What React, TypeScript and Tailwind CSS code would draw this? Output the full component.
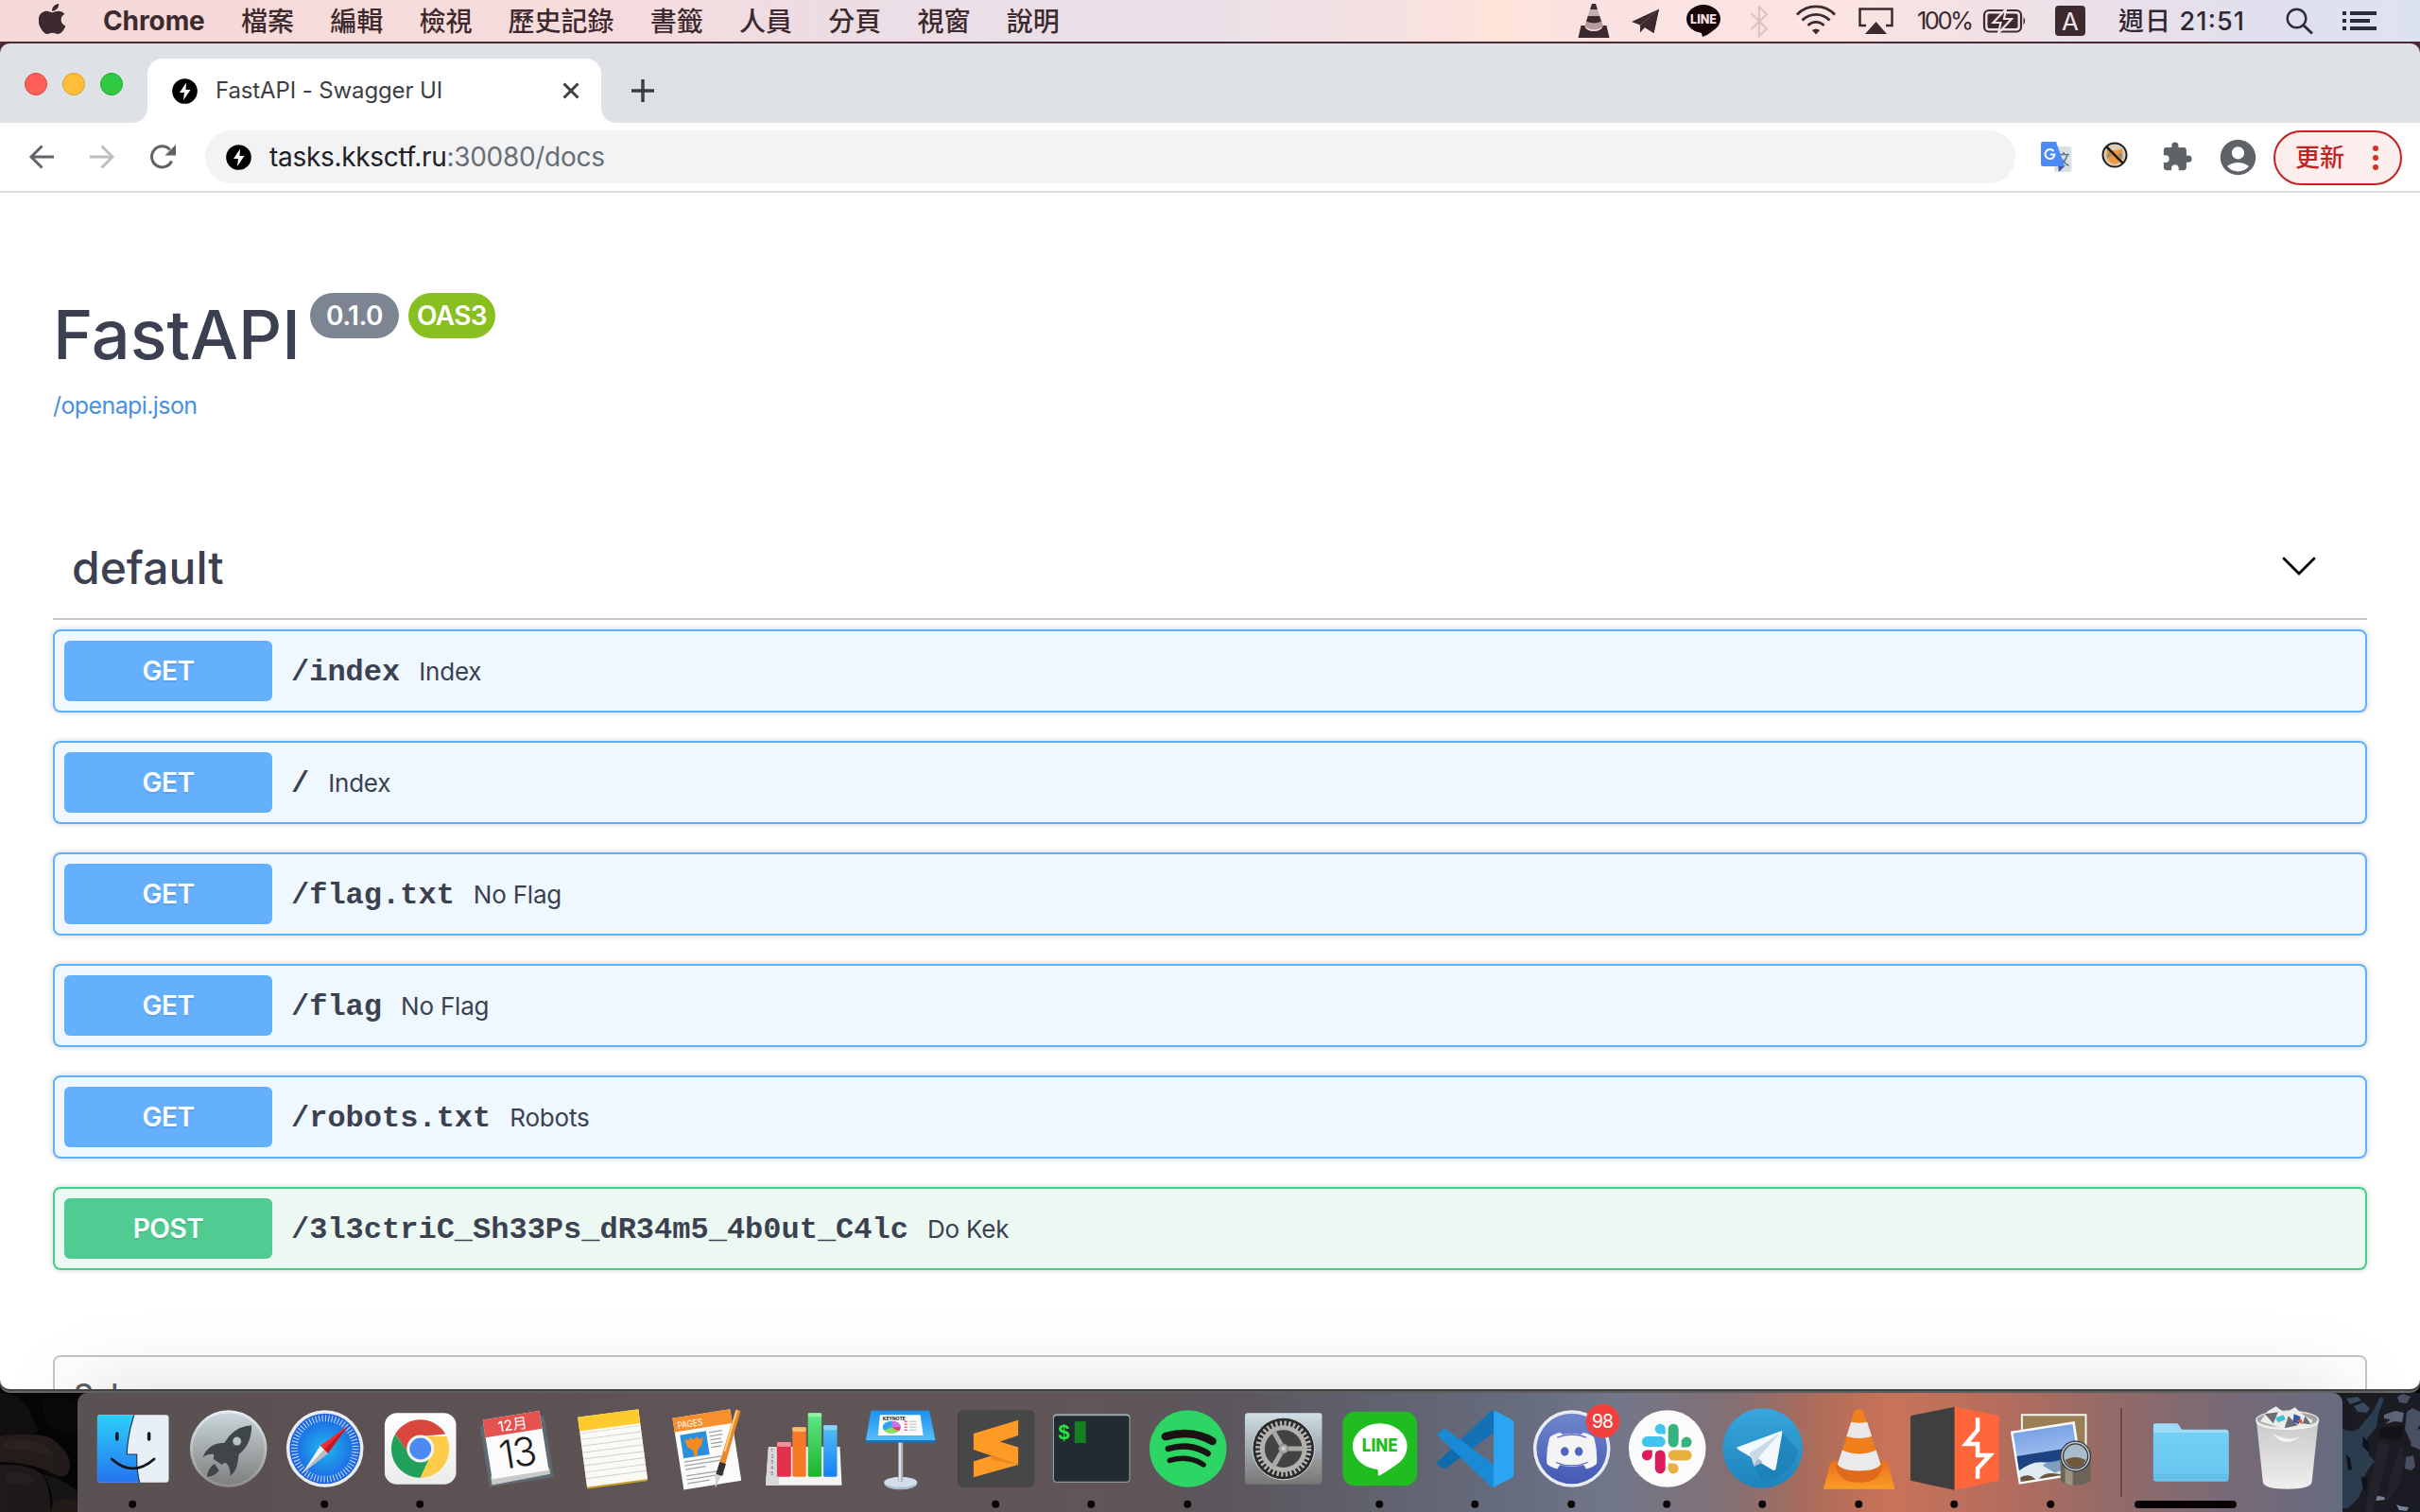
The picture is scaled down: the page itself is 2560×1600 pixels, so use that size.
import React from "react";
import { FaApple } from "react-icons/fa";
import { MdExtension, MdAccountCircle } from "react-icons/md";

const INK = "#3d2a2e";

/* ---------- macOS menu bar ---------- */

const menus = ["檔案", "編輯", "檢視", "歷史記錄", "書籤", "人員", "分頁", "視窗", "說明"];

function MenuBar() {
  return (
    <div className="relative flex h-11 shrink-0 items-center bg-[linear-gradient(90deg,#f5d8d8_0%,#f7dcdc_18%,#f5dbdd_27%,#ecdde4_34%,#eadfe7_45%,#ede0e7_52%,#f6e1e1_58%,#ffe3da_62%,#fae2e2_66%,#fbe4e2_76%,#f3e1e4_81%,#e9e0ea_87%,#dfe0ef_95%,#dde2f1_100%)] pl-[41px] text-[28px] leading-[44px] text-[#3d2a2e]">
      <FaApple className="-mt-[5px] h-8 w-7 shrink-0" preserveAspectRatio="none" viewBox="8 32 368 448" />
      <span className="ml-[40px] w-[146px] font-bold tracking-[-0.1px]">Chrome</span>
      <div className="flex gap-[38.2px] pt-[2px] font-medium">
        {menus.map((m) => (
          <span key={m}>{m}</span>
        ))}
      </div>
      <svg className="absolute left-[1660px] top-0" width="900" height="44" viewBox="1660 0 900 44" fill={INK}>
        <path d="M1684 4h4l2 6h-8z" />
        <path d="M1682 10h8l2.500 7.500q-6.500 2-13 0z" fill="#c4adae" />
        <path d="M1679.800 17h12.400l2 6q-8 4-16.400 0z" />
        <path d="M1678 22.500q8 4 16.200 0l2 5.500q-10 7-20 0z" fill="#b39b9d" />
        <path d="M1672.500 27h3.500q2 6 10 6t10-6h3.500l3 13h-33z" />
        <path d="M1755 9.500 1726 23l9 3.500zM1755 9.500l-17.500 18L1749.500 35z" />
        <path d="M1755 9.500 1735 26.500v8l5-5.500 9.500 6z" />
        <ellipse cx="1802" cy="20" rx="18" ry="15" fill="#170508" />
        <path d="M1791 30q10 3 10 9 11-4 15-12z" fill="#170508" />
        <text x="1802" y="24.500" fontSize="12.500" fontWeight="800" fill="#fbe3e2" textAnchor="middle" fontFamily="Inter">LINE</text>
        <path d="M1852.500 14 1869 30.500 1860.800 38V7.500L1869 15 1852.500 31" fill="none" stroke="#d9c3c5" strokeWidth="2" />
        <g fill="none" stroke={INK} strokeWidth="2.800">
          <path d="M1901 15.500a27.500 27.500 0 0 1 40 0" />
          <path d="M1906.500 21.500a20 20 0 0 1 29 0" />
          <path d="M1912.500 27a12 12 0 0 1 17 0" />
        </g>
        <path d="M1917 32q4-3 8 0l-4 4.500z" />
        <path d="M1974 27h-6.500V9.500h34V27h-6.500" fill="none" stroke={INK} strokeWidth="2.500" />
        <path d="M1984.500 23 1996 36h-23z" />
        <text x="2028" y="31" fontSize="25.500" textLength="60" fontFamily="Inter" fontWeight="400">100%</text>
        <rect x="2099" y="11" width="39" height="22.500" rx="5" fill="none" stroke={INK} strokeWidth="2.200" />
        <rect x="2102.500" y="14.500" width="32" height="15.500" rx="2" />
        <path d="M2140.500 18q3.500 4.500 0 8.500z" />
        <path d="M2122 9.500 2108.500 24h8l-2.500 11 14-15h-8z" stroke="#f3e1e4" strokeWidth="2.200" />
        <rect x="2174" y="6" width="32" height="32" rx="4" />
        <text x="2190" y="31.500" fontSize="26" fill="#f1e3e8" textAnchor="middle" fontFamily="Inter">A</text>
        <text x="2241" y="31.500" fontSize="27" textLength="133" fontWeight="500" fill="#302730" fontFamily="Inter, 'Noto Sans CJK TC', sans-serif">週日 21:51</text>
        <circle cx="2429.500" cy="19.500" r="9.800" fill="none" stroke="#302a35" strokeWidth="2.400" />
        <path d="m2436.500 26.500 9.500 9" fill="none" stroke="#302a35" strokeWidth="3" />
        <path d="M2478 12h4v4h-4zM2478 20h4v4h-4zM2478 28h4v4h-4zM2486 12h28v4h-28zM2486 20h21v4h-21zM2486 28h28v4h-28z" fill="#2a2a3a" />
      </svg>
    </div>
  );
}

/* ---------- Chrome window ---------- */

function Bolt() {
  return (
    <svg width="27" height="27" viewBox="0 0 27 27" className="shrink-0">
      <circle cx="13.500" cy="13.500" r="13.300" />
      <path d="M15 4.500 8 15h5l-1 8 7.500-11h-5z" fill="#fff" />
    </svg>
  );
}

function TabStrip() {
  return (
    <div className="flex h-[84px] shrink-0 items-end rounded-t-[10px] bg-[#dee1e6]">
      <div className="flex w-[140px] items-center gap-4 self-stretch pl-[26px] pt-[2px]">
        <i className="size-6 rounded-full border border-[#e0443e] bg-[#ff5f57]" />
        <i className="size-6 rounded-full border border-[#dea123] bg-[#ffbd3a]" />
        <i className="size-6 rounded-full border border-[#1aab29] bg-[#30cb43]" />
      </div>
      <svg width="16" height="16" className="shrink-0">
        <path d="M16 0v16H0A16 16 0 0 0 16 0z" fill="#fff" />
      </svg>
      <div className="flex h-[68px] w-[480px] items-center rounded-t-2xl bg-white pl-[26px]">
        <Bolt />
        <span className="ml-[19px] grow text-[24px] leading-[68px] tracking-[-0.12px] text-[#3c4043]">FastAPI - Swagger UI</span>
        <svg width="18" height="18" viewBox="0 0 18 18" className="mr-[23px]">
          <path d="m1.500 1.500 15 15m0-15-15 15" stroke="#3c4043" strokeWidth="3" />
        </svg>
      </div>
      <svg width="16" height="16" className="shrink-0">
        <path d="M0 0v16h16A16 16 0 0 1 0 0z" fill="#fff" />
      </svg>
      <svg width="24" height="24" viewBox="0 0 24 24" className="mb-[22px] ml-4">
        <path d="M12 0v24M0 12h24" stroke="#3c4043" strokeWidth="3.500" />
      </svg>
    </div>
  );
}

function Toolbar() {
  return (
    <div className="flex h-[74px] shrink-0 items-center border-b-2 border-[#dadce0] bg-white pl-[30px]">
      <svg width="28" height="28" viewBox="0 0 28 28" fill="none" stroke="#5f6368" strokeWidth="3">
        <path d="M27 14H3M14.500 2.500 3 14l11.500 11.500" />
      </svg>
      <svg width="28" height="28" viewBox="0 0 28 28" fill="none" stroke="#bcbec1" strokeWidth="3" className="ml-9">
        <path d="M1 14h24M13.500 2.500 25 14 13.500 25.500" />
      </svg>
      <svg width="28" height="28" viewBox="0 0 28 28" className="ml-9">
        <path d="M23.500 18.500a11 11 0 1 1-1.800-12" fill="none" stroke="#5f6368" strokeWidth="3" />
        <path d="M28 1v11.500H16.500z" fill="#5f6368" />
      </svg>
      <div className="ml-[31px] flex h-14 w-[1915px] items-center rounded-full bg-[#f1f3f4] pl-[22px]">
        <Bolt />
        <span className="ml-[19px] text-[28px] leading-[56px] tracking-[-0.3px] text-[#202124]">
          tasks.kksctf.ru<span className="text-[#6a6e73]">:30080/docs</span>
        </span>
      </div>
      <svg width="34" height="34" viewBox="0 0 34 34" className="ml-[27px]">
        <rect x="14" y="6" width="18.500" height="27" rx="2" fill="#dcdfe2" />
        <path d="M18 14.500h12M24 12v2.500M28 14.500q-2 8-9 11.500M20.500 17q2 5 9 9.500" stroke="#5c7c8a" strokeWidth="1.700" fill="none" />
        <path d="m19 33 7-7h-8z" fill="#3c54b8" />
        <path d="M2 1h14l9 26H2q-2 0-2-2V3q0-2 2-2z" fill="#4c8bf5" />
        <path d="M13.500 11A5 5 0 1 0 14.500 14.500H9.800" stroke="#fff" strokeWidth="2" fill="none" />
      </svg>
      <svg width="28" height="28" viewBox="0 0 28 28" className="-mt-1 ml-[30px]">
        <circle cx="14" cy="14" r="12.500" fill="#d9cdbb" stroke="#1f1f1f" strokeWidth="2" />
        <path d="m6 7 5 2h6l5-2 1 9-4 6-5 2-5-2-4-6z" fill="#f0993a" />
        <path d="m7 11 4 3-5 4zM21 11l-4 3 5 4z" fill="#8a8f95" />
        <path d="m5 5 18 18" stroke="#1f1f1f" strokeWidth="2.500" />
      </svg>
      <MdExtension className="ml-[35px] size-[34px] text-[#5f6368]" />
      <MdAccountCircle className="ml-[25px] size-[45px] text-[#5f6368]" />
      <div className="ml-[15px] mt-[1px] flex h-[58px] w-[136px] items-center rounded-full border-[2.500px] border-[#c5221f] bg-[#fceeed] pl-[21px] text-[26px] leading-[54px] text-[#c5221f]">
        <span className="mt-[1px] font-medium">更新</span>
        <span className="ml-[30px] flex flex-col gap-1">
          <i className="size-[6px] rounded-full bg-[#d93025]" />
          <i className="size-[6px] rounded-full bg-[#d93025]" />
          <i className="size-[6px] rounded-full bg-[#d93025]" />
        </span>
      </div>
    </div>
  );
}

type Op = { method: "GET" | "POST"; path: string; summary: string };

const ops: Op[] = [
  { method: "GET", path: "/index", summary: "Index" },
  { method: "GET", path: "/", summary: "Index" },
  { method: "GET", path: "/flag.txt", summary: "No Flag" },
  { method: "GET", path: "/flag", summary: "No Flag" },
  { method: "GET", path: "/robots.txt", summary: "Robots" },
  { method: "POST", path: "/3l3ctriC_Sh33Ps_dR34m5_4b0ut_C4lc", summary: "Do Kek" },
];

const rowStyle = {
  GET: "border-[#61affe] bg-[#eff7ff]",
  POST: "border-[#49cc90] bg-[#ecf9f3]",
};
const methodStyle = {
  GET: "bg-[#65b0fd]",
  POST: "bg-[#50cc93]",
};

function Operation({ method, path, summary }: Op) {
  return (
    <div className={`flex h-[88px] items-center rounded-lg border-2 pl-[10px] shadow-[0_0_6px_rgba(0,0,0,0.19)] ${rowStyle[method]}`}>
      <span className={`h-16 w-[220px] rounded-md text-center text-[28px] font-semibold leading-[64px] tracking-[-0.4px] text-white [text-shadow:0_2px_0_rgba(0,0,0,0.1)] ${methodStyle[method]}`}>
        {method}
      </span>
      <span className="ml-[20px] pt-[4px] font-['Liberation_Mono'] text-[32px] font-bold leading-[60px] text-[#3b4151]">{path}</span>
      <span className="ml-[20px] pt-[2px] text-[26px] leading-[60px] tracking-[-0.2px] text-[#3b4151]">{summary}</span>
    </div>
  );
}

function Docs() {
  return (
    <main className="flex grow flex-col overflow-hidden bg-white px-14 pt-[106px] text-[#3b4151]">
      <div className="flex h-[88px] shrink-0 items-start">
        <h1 className="w-[272px] whitespace-nowrap text-[72px] font-medium leading-[88px] tracking-[0px]">FastAPI</h1>
        <span className="h-12 w-[94px] rounded-[24px] bg-[#7d8492] text-center text-[28px] font-semibold leading-[48px] tracking-[-0.5px] text-white">0.1.0</span>
        <span className="ml-[10px] h-12 w-[92px] rounded-[24px] bg-[#89bf20] text-center text-[28px] font-semibold leading-[48px] tracking-[-0.6px] text-white">OAS3</span>
      </div>
      <a className="mt-[14px] h-[33px] shrink-0 text-[25px] leading-[35px] tracking-[-0.6px] text-[#4990e2]">/openapi.json</a>
      <div className="mt-[103px] flex h-[108px] shrink-0 items-center justify-between border-b-2 border-[#c5c6cb] pl-[20px] pr-[54px]">
        <h2 className="text-[48px] font-medium leading-[106px] tracking-[0px]">default</h2>
        <svg width="36" height="20" viewBox="0 0 36 20" className="-mt-[4px]">
          <path d="m2 2 16 16L34 2" fill="none" stroke="#000" strokeWidth="2.800" strokeLinecap="round" />
        </svg>
      </div>
      <div className="mt-[10px] flex flex-col gap-[30px]">
        {ops.map((o) => (
          <Operation key={o.path} {...o} />
        ))}
      </div>
      <section className="mt-[90px] flex h-[120px] shrink-0 items-start rounded-lg border-2 border-[#c4c5cb] pl-[20px] pt-[21px]">
        <h3 className="text-[32px] font-medium leading-[40px] text-[#606060]">Schemas</h3>
      </section>
    </main>
  );
}

/* ---------- Dock ---------- */

/* Each drawing uses a 102x126 cell, with the icon centred on (51, 59). */
const FinderIcon = (
  <g>
    <rect x="13" y="23" width="76" height="72" rx="3" fill="#e9eff6" />
    <path d="M16 23h36q-7 22-7.500 42H55q-.5 16 3 30H16q-3 0-3-3V26q0-3 3-3z" fill="url(#finder)" />
    <path d="M52 23q-7 22-7.500 42H55q-.5 16 3 30" fill="none" stroke="#1b3a5e" strokeWidth="1.200" />
    <path d="M34 43v6M68 43v6" stroke="#141a24" strokeWidth="3.500" strokeLinecap="round" />
    <path d="M28.500 70q22 20 45 0" fill="none" stroke="#11161e" strokeWidth="2.800" strokeLinecap="round" />
  </g>
);

const LaunchpadIcon = (
  <g>
    <circle cx="51" cy="59" r="41" fill="url(#rimGrey)" />
    <circle cx="51" cy="59" r="38" fill="url(#launch)" />
    <path d="M75.500 34q-15 1-24 12l-5 7q-10-1-17 6-4 4-6 9 7-4 12-3l-.5 5 9 6q1-2 4-2 5 3 5 14 7-6 8-16l1-7q14-11 13.500-31z" fill="#3f4549" />
    <path d="M36 75q-7 5-8 14 9-1 13-7z" fill="#3f4549" />
    <circle cx="60" cy="51" r="4.500" fill="#b9c4c9" />
  </g>
);

const SafariIcon = (
  <g>
    <circle cx="51" cy="59" r="41" fill="#e9ecf0" />
    <circle cx="51" cy="59" r="37.500" fill="url(#safari)" />
    <circle cx="51" cy="59" r="32.500" fill="none" stroke="#d6ecff" strokeWidth="7" strokeDasharray="1.100 2.303" opacity=".85" />
    <path d="m76 34-30 22 8 8z" fill="#ee2b33" />
    <path d="m76 34-22 30-4-4z" fill="#c3161f" />
    <path d="m27 85 19-29 8 8z" fill="#f4f4f4" />
    <path d="m27 85 27-21-4-4z" fill="#b9bcc0" />
  </g>
);

const ChromeIcon = (
  <g>
    <rect x="13" y="21" width="76" height="76" rx="13" fill="url(#paper)" />
    <g transform="translate(51 59)">
      <path d="M-26.800-15.500A31 31 0 0 1 26.800-15.500L0-13-11.300 6.500z" fill="#d9463d" />
      <path d="M-26.800-15.500-11.300 6.500 0 0 11.300 6.500 0 31A31 31 0 0 1-26.800-15.500z" fill="#21a05b" />
      <path d="M0 31 11.300 6.500 0-13H27.800A31 31 0 0 1 0 31z" fill="#fecb4b" />
      <circle r="14.500" fill="#f3f3f3" />
      <circle r="11.500" fill="#4b8af2" />
    </g>
  </g>
);

const CalendarIcon = (
  <g transform="rotate(-9 51 59)">
    <rect x="16" y="29" width="69" height="66" fill="#5d6a72" />
    <path d="M19 84h63v7l-63 2z" fill="#c9c9c9" />
    <rect x="20" y="23" width="61" height="64" fill="#fbfbfb" />
    <rect x="20" y="23" width="61" height="19" fill="#e4534f" />
    <text x="50.500" y="38.500" textAnchor="middle" fontSize="15.500" fill="#fff" fontFamily="Inter, 'Noto Sans CJK TC', sans-serif">12月</text>
    <text x="50.500" y="78.500" textAnchor="middle" fontSize="42" fontWeight="300" letterSpacing="-2" fill="#1d1d1d" fontFamily="Inter, sans-serif">13</text>
  </g>
);

const NotesIcon = (
  <g transform="rotate(-7.500 51 59)">
    <rect x="19" y="22" width="65" height="76" rx="1" fill="#c79d2b" />
    <rect x="19" y="21" width="65" height="75" rx="1" fill="#fbfaf7" />
    <path d="M19 21h65v15H19z" fill="#fecb2f" />
    <path d="M19 38.500h65" stroke="#b9b3a3" strokeDasharray="1 1.500" />
    <path d="M19 45h65M19 52h65M19 59h65M19 66h65M19 73h65M19 80h65M19 87h65" stroke="#cfcfd2" strokeWidth="1" />
  </g>
);

const PagesIcon = (
  <g>
    <g transform="rotate(-9 51 59)">
      <rect x="18" y="21" width="62" height="77" fill="#fbfbfb" />
      <rect x="18" y="21" width="62" height="15" fill="#f78f2a" />
      <text x="22" y="33" fontSize="10" fill="#fff" textLength="27" lengthAdjust="spacingAndGlyphs" fontFamily="Inter">PAGES</text>
      <rect x="23" y="40" width="28" height="25" fill="#2b8fe0" />
      <path d="m27 45 5 2 1-3 4 3 4-3 1 3 5-1-3 8-5 4-1 7h-3l-1-7-5-4z" fill="#f58a1f" />
      <path d="M54 42h14M54 46h14M54 50h12M54 54h13M54 58h11M23 69h40M23 73h42M23 77h22M23 84h38M23 88h40M23 92h24" stroke="#a3a3a3" strokeWidth="1.300" />
    </g>
    <path d="m80 17 5 2-18 62-8 16 2-18z" fill="#e9892b" />
    <path d="m81 18-13 44" stroke="#ffd087" strokeWidth="2" />
    <path d="m66 74-4 13" stroke="#333" strokeWidth="7" />
    <path d="m58 86 6 2-6 13z" fill="#cfd3d8" />
  </g>
);

const NumbersIcon = (
  <g>
    <path d="M13 57h76l2 41H10z" fill="#f4f4f4" />
    <path d="M13 57h11v41H10z" fill="#d9d9dc" />
    <g fontSize="5" fill="#666" fontFamily="Inter">
      <text x="15.500" y="63">1</text>
      <text x="15.500" y="69">2</text>
      <text x="15" y="75">3</text>
      <text x="15" y="81">4</text>
      <text x="15" y="87">5</text>
    </g>
    <rect x="22" y="52" width="15" height="37" rx="1.500" fill="#e2304d" />
    <rect x="22" y="52" width="15" height="5" rx="1.500" fill="#f58c96" />
    <rect x="38.500" y="36" width="14.500" height="53" rx="1.500" fill="#f47a2a" />
    <rect x="38.500" y="36" width="14.500" height="5" rx="1.500" fill="#fcbc6b" />
    <rect x="55" y="21" width="14.500" height="68" rx="1.500" fill="url(#barGreen)" />
    <rect x="55" y="21" width="14.500" height="4" rx="1.500" fill="#93f0a7" />
    <rect x="71.500" y="34" width="14.500" height="55" rx="1.500" fill="url(#barBlue)" />
    <rect x="71.500" y="34" width="14.500" height="5" rx="1.500" fill="#8ad4fb" />
  </g>
);

const KeynoteIcon = (
  <g>
    <ellipse cx="51" cy="96" rx="17.500" ry="6.500" fill="#a9bccd" />
    <ellipse cx="51" cy="94.500" rx="17.500" ry="5.500" fill="#d2dfea" />
    <path d="M48.500 52h5v42h-5z" fill="#aeb6bd" />
    <path d="M49.500 52h1.500v42h-1.500z" fill="#eef1f4" />
    <path d="M19.500 18.500h62L88 50v2.500H14V50z" fill="#1176c0" />
    <path d="M19.500 18.500h62L88 50H14z" fill="url(#keynote)" />
    <path d="M29 23h43l3 22H27z" fill="#fdfdfd" />
    <text x="32" y="28.500" fontSize="5" fontWeight="800" textLength="24" lengthAdjust="spacingAndGlyphs" fill="#333" fontFamily="Inter">KEYNOTE</text>
    <ellipse cx="41.500" cy="36" rx="9.500" ry="6.500" fill="#2fa4ee" />
    <path d="M41.500 36 42 29.500q8 0 9 6.500z" fill="#cf6fe8" />
    <path d="M41.500 36H51q0 3-3 5z" fill="#f23a57" />
    <path d="m41.500 36 7 4.500q-8 5-15.500-1z" fill="#8ddc5a" />
    <path d="M55 30h3M55 33h3M55 36h3M55 39h3" stroke="#e8608b" strokeWidth="1.500" />
    <path d="M60 30h8M60 33h8M60 36h8M60 39h8" stroke="#bbb" strokeWidth="1" />
  </g>
);

const SublimeIcon = (
  <g>
    <rect x="10" y="18" width="82" height="82" rx="5" fill="#474747" />
    <path d="M27 72.500 46 66.500 74.500 76 27 89.500z" fill="#ff9a27" />
    <path d="M27 43 74.500 28.500V45L55 51.500l19.500 6V76L27 60z" fill="#ff9a27" />
    <path d="m46 66.500 28.500 9.500-28-5z" fill="#e5831a" opacity=".7" />
  </g>
);

const TerminalIcon = (
  <g>
    <rect x="10" y="22" width="82" height="73" rx="4" fill="#9aa7ad" />
    <rect x="11" y="24" width="80" height="70" rx="3" fill="#212b31" />
    <text x="15" y="49" fontSize="22" fontWeight="700" fill="#28e639" fontFamily="'Liberation Mono', monospace">$</text>
    <rect x="33" y="30" width="12" height="23" fill="#158021" />
  </g>
);

const SpotifyIcon = (
  <g>
    <circle cx="51" cy="59" r="41" fill="#2dd565" />
    <g fill="none" stroke="#191414" strokeLinecap="round">
      <path d="M27 46q28-8 50 5" strokeWidth="8.500" />
      <path d="M30 59q23-7 42 5" strokeWidth="6.500" />
      <path d="M31.500 71.500q20-6 36 4.500" strokeWidth="5.500" />
    </g>
  </g>
);

const SettingsIcon = (
  <g>
    <rect x="10" y="21" width="82" height="76" rx="3" fill="url(#steel)" />
    <circle cx="51" cy="59" r="33" fill="#2b2b2c" stroke="#d4dde2" strokeWidth="1" />
    <circle cx="51" cy="59" r="27" fill="none" stroke="#b9b7b4" strokeWidth="5.500" strokeDasharray="2.300 2.412" />
    <circle cx="51" cy="59" r="22.500" fill="#434343" stroke="#b3b1ae" strokeWidth="5" />
    <path d="M51 59h22M51 59 40 40M51 59 40 78" stroke="#aaa8a5" strokeWidth="5" />
    <circle cx="51" cy="59" r="5" fill="#a9a7a4" stroke="#7d7b78" />
    <circle cx="51" cy="59" r="2" fill="#d2d2d0" />
  </g>
);

const LineIcon = (
  <g>
    <rect x="11.500" y="19.500" width="79" height="79" rx="13" fill="#20bd20" />
    <ellipse cx="51" cy="56.500" rx="29" ry="24.500" fill="#fff" />
    <path d="M36 75q15 3 13 11.500 0 2 2 1Q72 75 77 67z" fill="#fff" />
    <text x="51" y="62.500" textAnchor="middle" fontSize="18.500" fontWeight="800" textLength="38" lengthAdjust="spacingAndGlyphs" fill="#20bd20" fontFamily="Inter">LINE</text>
  </g>
);

const CodeIcon = (
  <g>
    <path d="M10 74 66 20q3-3 6-1v22L20 79q-3 2-5 0l-5-3z" fill="#1571b5" />
    <path d="M10 74 34 51l10 11-24 17q-3 2-5 0z" fill="#0f6aae" />
    <path d="m10 44 6-5q2-2 5 0l51 38v23q-4 1-6-2z" fill="#198ad6" />
    <path d="M70.500 18 90 28q2 1 2 4v54q0 3-2 4L70.500 100z" fill="#2ba4f1" />
  </g>
);

const DiscordIcon = (
  <g>
    <circle cx="51" cy="59" r="41" fill="#e9ebf2" />
    <circle cx="51" cy="59" r="37.500" fill="url(#discord)" />
    <path d="M41.500 44q9.500-2 19 0l3-2q7 1.500 11 5 4 13 3 28-4 4-11 5.500l-3-4.500q-6 2-12.500 2t-12.500-2l-3 4.500q-7-1.500-11-5.500-1-15 3-28 4-3.500 11-5z" fill="#f4f4f6" />
    <path d="M35.500 47q16-6 31 0" fill="none" stroke="#5a6fc2" strokeWidth="1.500" />
    <path d="M34 73.500q17 7 34 0" fill="none" stroke="#5467bb" strokeWidth="1.200" />
    <ellipse cx="43.500" cy="62" rx="4.300" ry="4.700" fill="#4f66bb" />
    <ellipse cx="58.500" cy="62" rx="4.300" ry="4.700" fill="#4f66bb" />
    <circle cx="84" cy="29.500" r="18" fill="#f2403d" />
    <text x="83.500" y="36.500" textAnchor="middle" fontSize="19.500" letterSpacing="-1" fill="#fff" fontFamily="Inter">98</text>
  </g>
);

const SlackIcon = (
  <g>
    <circle cx="51" cy="59" r="41" fill="#fbfbfb" />
    <rect x="52" y="32.500" width="11" height="25" rx="5.500" fill="#36b37e" />
    <path d="M66 57.500V52a5.500 5.500 0 1 1 5.500 5.500z" fill="#36b37e" />
    <rect x="24" y="46" width="25" height="11" rx="5.500" fill="#41c5ee" />
    <path d="M49 43.500h-5.500a5.500 5.500 0 1 1 5.500-5.500z" fill="#41c5ee" />
    <rect x="38" y="60.500" width="11" height="25" rx="5.500" fill="#de1c59" />
    <path d="M35 60.500V66a5.500 5.500 0 1 1-5.500-5.500z" fill="#de1c59" />
    <rect x="52" y="60.500" width="25" height="11" rx="5.500" fill="#e9b03d" />
    <path d="M52 74.500h5.500a5.500 5.500 0 1 1-5.500 5.500z" fill="#e9b03d" />
  </g>
);

const TelegramIcon = (
  <g>
    <circle cx="51" cy="58.500" r="42.500" fill="url(#telegram)" />
    <path d="m42 78 9 16q20-2 33-20l5-12-18-22z" fill="#1b7db4" opacity=".6" />
    <path d="M70 40.500q2-1 1.800 1.500L65 80q-1 3-3.500 1.500L25 60q-3-2 0-3z" fill="#f3f8fc" />
    <path d="m37 64 33-22-24 27-4 9z" fill="#c9d9e6" />
    <path d="m42 78 4-9 5 4.500z" fill="#a7bccc" />
  </g>
);

const VlcIcon = (
  <g>
    <path d="M24 72h54q3 0 4 3l7 27H13l7-27q1-3 4-3z" fill="url(#vlc)" />
    <path d="M26 76q2 19 25 19t25-19z" fill="#e06a1c" />
    <path d="M46 18q4.500-2 9 0L73 74q2 7-22 8-24-1-22-8z" fill="#ee7f1a" />
    <path d="M42.500 30.500q8.500 2 17 0l5 15.500q-13 4-27 0z" fill="#e8e8e8" />
    <path d="M33 60.500q18 8 36 0l5 15q-5 7-23 7t-23-7z" fill="#e8eaec" />
  </g>
);

const BurpIcon = (
  <g>
    <path d="M4 24 51 14.500V103L4 93z" fill="#3f3f40" />
    <path d="M51 14.500 98 24v69l-47 10z" fill="#ff663b" />
    <path d="M75.500 26v13L63 54h12.500v12h13L75.500 80v11" fill="none" stroke="#fff" strokeWidth="4.500" />
  </g>
);

const PreviewIcon = (
  <g>
    <rect x="19" y="22" width="70" height="56" fill="#f5f5f0" />
    <rect x="21" y="24" width="66" height="40" fill="#9a7f55" />
    <g transform="rotate(-9 46 64)">
      <rect x="12" y="35" width="69" height="57" fill="#f7f9fb" />
      <rect x="14.500" y="37.500" width="64" height="52" fill="url(#sky)" />
      <path d="M14.500 62h64v9q-20 6-40 2l-24 4z" fill="#1c4380" />
      <path d="M14.500 78q14-9 28-5t36-5v12l-22 9h-42z" fill="#dfeaf2" />
      <path d="M40 76q10-6 20-2l12 6-20 6z" fill="#3f6b9e" opacity=".6" />
      <path d="M14.500 85q10-4 16 4.500h-16zM34 89.500q8-8 26 0z" fill="#6b553c" />
    </g>
    <path d="M61 62v30q2 6 16 6t16-6V62z" fill="#6c6557" />
    <path d="M66 76v20q5 2 8 2V78z" fill="#9b9484" />
    <circle cx="77" cy="67" r="16.500" fill="#33343a" />
    <circle cx="77" cy="67" r="14.500" fill="none" stroke="#c3cbd2" strokeWidth="1.500" />
    <circle cx="77" cy="67" r="12.500" fill="#a9bccb" />
    <path d="M66 71q10-6 22 0-3 8-11 8.500-8-1-11-8.500z" fill="#70583b" />
  </g>
);

const FolderIcon = (
  <g>
    <path d="M13 32h22q2 0 3 1.500l3 5H88q3 0 3 3v48H11V35q0-3 2-3z" fill="#9ddcf8" />
    <path d="M11 42h80v49q0 3-3 3H14q-3 0-3-3z" fill="url(#folder)" />
    <path d="M11 87h80M11 90h80" stroke="#5cb6dd" strokeWidth="1" />
  </g>
);

const TrashIcon = (
  <g>
    <path d="M18 29q33 10 66 0l-7 66q-2 7-26 7t-26-7z" fill="url(#trash)" />
    <ellipse cx="51" cy="28" rx="33" ry="9" fill="#a3a3a3" stroke="#e4e4e4" strokeWidth="1.500" />
    <path d="m22 30 8-11 9-5 8 6 5-1 7-4 9 8 10 6-4 7-23 3z" fill="#ececec" />
    <path d="m27 22 9 10 5-12zM52 24l10 10-14 3zM70 24l6 9-9-1z" fill="#6a6d70" />
    <path d="m38 26 9-3 2 5-8 3z" fill="#3fc3d5" />
    <path d="m58 22 7 3-2 8-6-3z" fill="#3355a8" />
    <path d="m60 29 6-2 1 6z" fill="#c8583c" />
    <path d="M18 29q1 9 33 9t33-9" fill="none" stroke="#f4f4f4" strokeWidth="1.500" />
    <path d="M35 43q14 16 30 3-12 6-30-3z" fill="#fafafa" opacity=".8" />
  </g>
);

const dockApps: { id: string; art: React.ReactNode; running?: boolean }[] = [
  { id: "finder", art: FinderIcon, running: true },
  { id: "launchpad", art: LaunchpadIcon },
  { id: "safari", art: SafariIcon, running: true },
  { id: "chrome", art: ChromeIcon, running: true },
  { id: "calendar", art: CalendarIcon },
  { id: "notes", art: NotesIcon },
  { id: "pages", art: PagesIcon },
  { id: "numbers", art: NumbersIcon },
  { id: "keynote", art: KeynoteIcon },
  { id: "sublime", art: SublimeIcon, running: true },
  { id: "terminal", art: TerminalIcon, running: true },
  { id: "spotify", art: SpotifyIcon, running: true },
  { id: "settings", art: SettingsIcon },
  { id: "line", art: LineIcon, running: true },
  { id: "code", art: CodeIcon, running: true },
  { id: "discord", art: DiscordIcon, running: true },
  { id: "slack", art: SlackIcon, running: true },
  { id: "telegram", art: TelegramIcon, running: true },
  { id: "vlc", art: VlcIcon, running: true },
  { id: "burp", art: BurpIcon, running: true },
  { id: "preview", art: PreviewIcon, running: true },
];

function Cell({ art, running }: { art: React.ReactNode; running?: boolean }) {
  return (
    <svg viewBox="0 0 102 126" className="h-[126px] w-[101.45px] shrink-0 overflow-visible">
      {art}
      {running && <circle cx="50.500" cy="118" r="4" fill="#080205" />}
    </svg>
  );
}

const stops: Record<string, [string, string]> = {
  finder: ["#2cd0fb", "#2474ee"],
  rimGrey: ["#e6f0f3", "#8c8c8c"],
  launch: ["#c9d6da", "#7f7f7f"],
  paper: ["#ffffff", "#ececec"],
  barGreen: ["#5fe88a", "#1db32c"],
  barBlue: ["#55c1f8", "#1580f0"],
  keynote: ["#1d92ee", "#55bdf8"],
  steel: ["#cfdfe6", "#777675"],
  discord: ["#6f86cb", "#4459b4"],
  telegram: ["#39a6de", "#1d83bb"],
  vlc: ["#e8701c", "#fb9d26"],
  sky: ["#7ba3e6", "#b8d2f3"],
  folder: ["#74cff7", "#69c5ef"],
  trash: ["#c9c9c9", "#efefef"],
};

function Gradients() {
  return (
    <svg width="0" height="0" className="absolute">
      <defs>
        {Object.entries(stops).map(([id, [a, b]]) => (
          <linearGradient key={id} id={id} x1="0" y1="0" x2="0" y2="1">
            <stop offset="0" stopColor={a} />
            <stop offset="1" stopColor={b} />
          </linearGradient>
        ))}
        <radialGradient id="safari">
          <stop offset="0" stopColor="#22b8ee" />
          <stop offset="1" stopColor="#1c5fe2" />
        </radialGradient>
      </defs>
    </svg>
  );
}

function Dock() {
  return (
    <div className="relative ml-[82px] flex h-[126px] w-[2396px] rounded-t-[10px] bg-[linear-gradient(90deg,#5a5153_0%,#5c5153_15%,#5f5456_30%,#605557_45%,#5c565d_51%,#60636f_58%,#676d80_64%,#727789_68%,#836f74_73%,#b06c58_77%,#c87359_80%,#b46d5d_85%,#926a68_90%,#776a77_95%,#666b7f_100%)] pl-[8px] shadow-[0_0_90px_rgba(0,0,0,0.15)]">
      {dockApps.map((a) => (
        <Cell key={a.id} art={a.art} running={a.running} />
      ))}
      <span className="ml-[23px] mr-[22px] mt-4 h-[94px] w-[2px] bg-[#6b4646]" />
      <div className="relative">
        <Cell art={FolderIcon} />
        <span className="absolute left-[-9px] top-[114px] h-2 w-[108px] rounded-full bg-[#080205]" />
      </div>
      <Cell art={TrashIcon} />
    </div>
  );
}

function Wallpaper() {
  return (
    <svg className="absolute bottom-0 left-0" width="2560" height="134" viewBox="0 0 2560 134">
      <rect width="2560" height="134" fill="#060608" />
      <path d="M0 8q22 0 32 20l8 20q-4 6-40 8z" fill="#131011" />
      <path d="M44 14q20-4 38 6v30q-20 4-34-12z" fill="#0b0a0b" />
      <path d="M0 54q20-4 44-1 16 2 28 22 5 12-2 20-10 4-20-2-24-12-50-10z" fill="#241d1c" />
      <path d="M4 60q18-4 36 0 12 4 18 16-26-10-54-8z" fill="#2b2322" />
      <path d="M0 84q30-2 44 10 8 6 10 40H0z" fill="#1f1a1b" />
      <path d="M6 92q20-2 32 8-14 6-32 4z" fill="#282122" />
      <path d="M46 94q18 4 36 18v22H56q0-24-10-40z" fill="#171517" />
      <path d="M0 82q30-1 60 14" stroke="#0a0809" strokeWidth="2" fill="none" />
      <path d="M56 124q14-6 26-2v12H54z" fill="#241c19" />
      <path d="M2470 8h90v126h-90z" fill="#1c1c24" />
      <path d="M2478 46q14 6 20-4l12-14 8-16 4 2-6 16-2 14-10 12 2 18 6 6-10 14-2 14-6 12-10 10h-6z" fill="#2d3f52" />
      <path d="m2490 22 10-4 7 6-3 5-10-1zM2482 14l12-2 4 4-12 4z" fill="#3c4d62" />
      <path d="m2522 31 12-4 9 2-2 10-8-1-10 3 6-5-7-1z" fill="#5f6578" />
      <path d="M2516 46q20-4 28-2l-4 12q-12 4-22-2z" fill="#151315" />
      <path d="m2546 28 6-4 8 4v14l-6 8-4 10-6-14zM2545 76l8-2 2 12-4 4-7-2zM2536 12l6-3 8 3-4 7-8-1zM2552 48l8-2v22l-10-4z" fill="#4a5164" />
      <path d="m2509 121 6-4 7 1 1 3-8 1zM2535 126l5 2 8 1-2 4-8-1z" fill="#79839a" />
      <path d="m2500 54 5 6 2 12-8-8zM2482 73l4 4 2 12-4 1zM2498 96l6 3-1 14-4-6z" fill="#0f1219" />
      <path d="m2516 60 12 4-8 34-10 36h-8l6-34zM2540 62l4 20-6 24-14 18 4-26z" fill="#24242d" />
    </svg>
  );
}

export default function App() {
  return (
    <div className="relative h-[1600px] w-[2560px] overflow-hidden bg-[#4a2b35] font-[Inter,'Noto_Sans_CJK_TC',sans-serif]">
      <Gradients />
      <Wallpaper />
      <div className="relative flex h-full flex-col">
        <MenuBar />
        <div className="mt-[2px] flex h-[1424px] shrink-0 flex-col overflow-hidden rounded-b-[10px] shadow-[0_2px_0_#454545,0_4px_0_#676767]">
          <TabStrip />
          <Toolbar />
          <Docs />
        </div>
        <div className="mt-1">
          <Dock />
        </div>
      </div>
    </div>
  );
}
